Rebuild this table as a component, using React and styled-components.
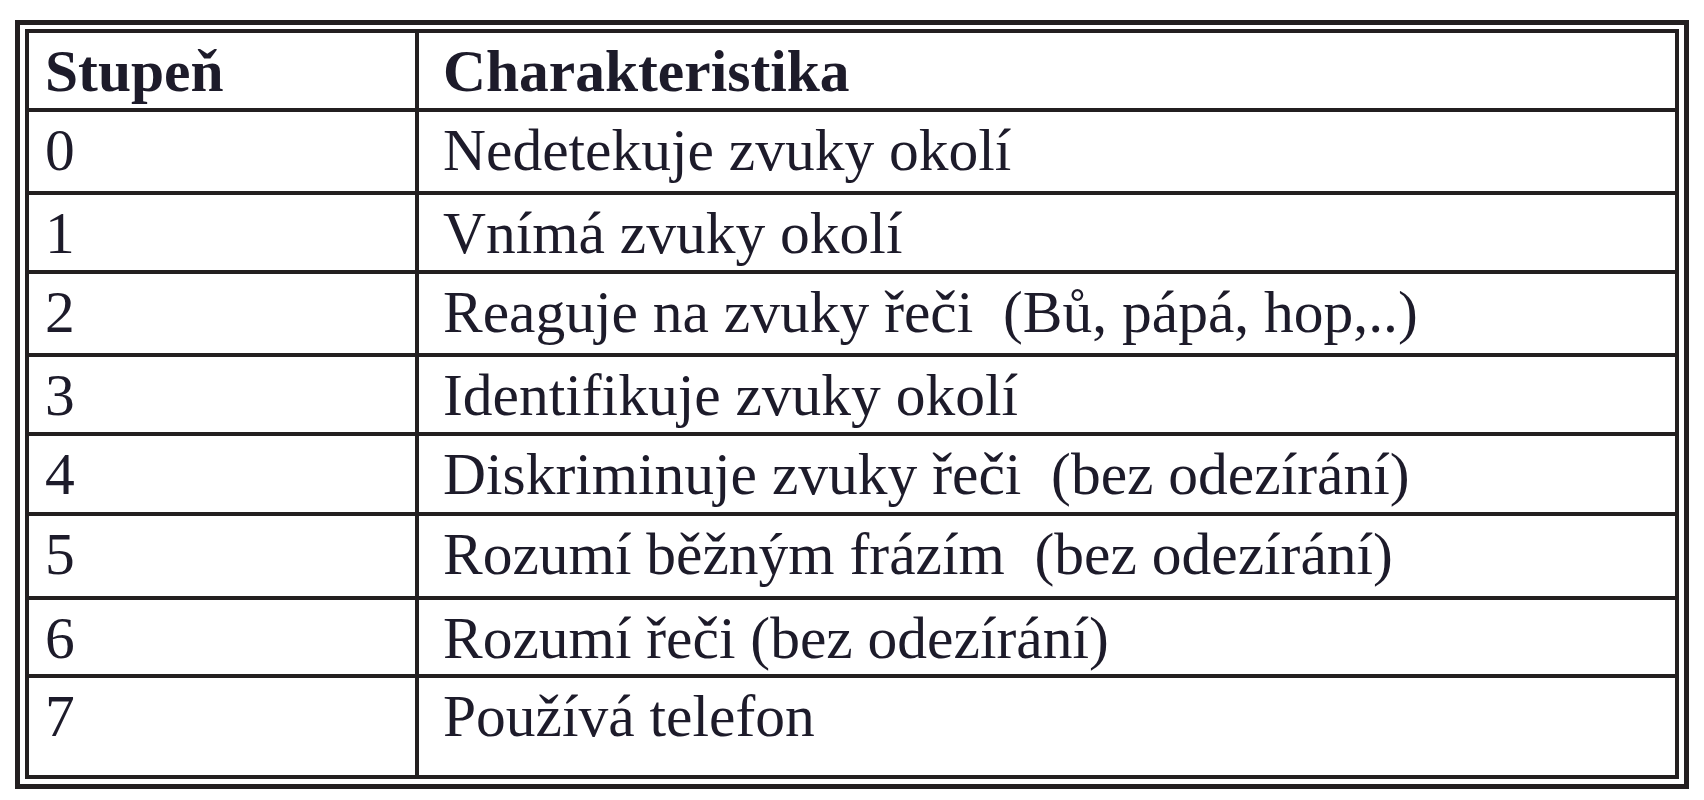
import React from 'react'
import styled, { createGlobalStyle } from 'styled-components'

const GlobalStyle = createGlobalStyle`
  html, body {
    margin: 0;
    padding: 0;
    background: #fff;
  }
`

const Page = styled.div`
  padding: 20px 0 0 15px;
`

const Frame = styled.div`
  box-sizing: border-box;
  width: 1674px;
  border: 5px solid #231f20;
  padding: 4px 5px 5px 5px;
`

const Grid = styled.div`
  display: grid;
  grid-template-columns: 386px 1fr;
  gap: 4px;
  padding: 4px;
  background: #231f20;
`

const Cell = styled.div`
  box-sizing: border-box;
  height: ${props => props.$h}px;
  background: #fff;
  padding: 4px 0 0 ${props => (props.$wide ? 24 : 16)}px;
  font-family: "Liberation Serif", "Times New Roman", serif;
  font-size: 59.5px;
  line-height: 68px;
  font-weight: ${props => (props.$head ? 700 : 400)};
  color: #1d1b2a;
  white-space: pre;
  overflow: hidden;
`

const rows = [
  { grade: '0', text: 'Nedetekuje zvuky okolí', h: 79 },
  { grade: '1', text: 'Vnímá zvuky okolí', h: 75 },
  { grade: '2', text: 'Reaguje na zvuky řeči  (Bů, pápá, hop,..)', h: 79 },
  { grade: '3', text: 'Identifikuje zvuky okolí', h: 75 },
  { grade: '4', text: 'Diskriminuje zvuky řeči  (bez odezírání)', h: 76 },
  { grade: '5', text: 'Rozumí běžným frázím  (bez odezírání)', h: 80 },
  { grade: '6', text: 'Rozumí řeči (bez odezírání)', h: 74 },
  { grade: '7', text: 'Používá telefon', h: 97 }
]

export default function App() {
  return (
    <Page>
      <GlobalStyle />
      <Frame>
        <Grid>
          <Cell $head $h={75}>Stupeň</Cell>
          <Cell $head $wide $h={75}>Charakteristika</Cell>
          {rows.map(row => (
            <React.Fragment key={row.grade}>
              <Cell $h={row.h}>{row.grade}</Cell>
              <Cell $wide $h={row.h}>{row.text}</Cell>
            </React.Fragment>
          ))}
        </Grid>
      </Frame>
    </Page>
  )
}
